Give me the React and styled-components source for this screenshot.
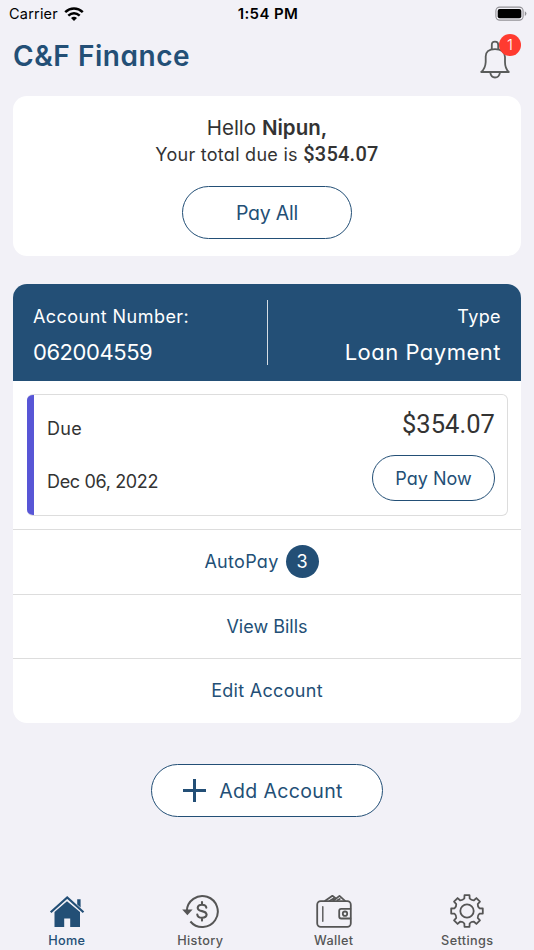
import React from "react";
import styled, { createGlobalStyle } from "styled-components";

const navy = "#234f76";
const grey = "#555555";

const GlobalStyle = createGlobalStyle`
  * {
    box-sizing: border-box;
  }
  body {
    margin: 0;
    background: #f2f1f7;
    font-family: Inter, "Open Sans", sans-serif;
    font-feature-settings: "cv11";
    color: #333333;
  }
  button {
    font-family: inherit;
    font-feature-settings: inherit;
    padding: 0;
    cursor: pointer;
  }
`;

const Screen = styled.div`
  display: flex;
  flex-direction: column;
  width: 534px;
  height: 950px;
  overflow: hidden;
`;

const StatusBar = styled.div`
  display: grid;
  grid-template-columns: 1fr auto 1fr;
  align-items: center;
  height: 28px;
  padding: 0 7px 0 9px;
  font-size: 14.5px;
  line-height: 28px;
  color: #000000;
  font-feature-settings: normal;
`;

const Carrier = styled.div`
  display: flex;
  align-items: center;
  gap: 6px;
  letter-spacing: 0.2px;
`;

const Clock = styled.div`
  font-size: 15px;
  font-weight: 600;
  letter-spacing: 0.4px;
`;

const Battery = styled.svg`
  justify-self: end;
`;

const Header = styled.header`
  display: flex;
  justify-content: space-between;
  align-items: flex-start;
  height: 68px;
  padding: 10px 24px 0 13px;
`;

const Title = styled.h1`
  margin: 0;
  font-size: 28px;
  font-weight: 600;
  line-height: 37px;
  letter-spacing: 0.55px;
  color: ${navy};
`;

const Bell = styled.div`
  position: relative;
  width: 30px;
  height: 40px;
  margin-top: 2px;

  svg {
    display: block;
  }
`;

const BellCount = styled.span`
  position: absolute;
  top: -6px;
  left: 19px;
  width: 22px;
  height: 22px;
  border-radius: 50%;
  background: #ff3b30;
  color: white;
  font-size: 15px;
  font-weight: 300;
  line-height: 22px;
  text-align: center;
`;

const Card = styled.section`
  margin: 0 13px;
  border-radius: 14px;
  background: white;
  overflow: hidden;
`;

const Greeting = styled(Card)`
  display: flex;
  flex-direction: column;
  align-items: center;
  flex: none;
  height: 160px;
  padding-top: 18px;
`;

const Hello = styled.div`
  font-size: 20.5px;
  line-height: 27px;

  b {
    font-weight: 600;
  }
`;

const TotalDue = styled.div`
  margin-bottom: 17px;
  font-size: 18px;
  line-height: 28px;
  letter-spacing: 0.27px;
`;

const Amount = styled.span`
  font-family: Roboto, sans-serif;
  font-size: ${p => p.$size}px;
  font-weight: ${p => p.$weight || 400};
  letter-spacing: ${p => p.$tracking || 0}px;
  line-height: ${p => p.$line || 20}px;
`;

const PillButton = styled.button`
  display: flex;
  align-items: center;
  justify-content: center;
  flex: none;
  width: ${p => p.$width}px;
  height: ${p => p.$height}px;
  border: 1.5px solid ${navy};
  border-radius: 27px;
  background: white;
  color: ${navy};
  font-size: ${p => p.$size}px;
  letter-spacing: ${p => p.$tracking}px;
`;

const Account = styled(Card)`
  flex: none;
  margin-top: 28px;
`;

const AccountHeader = styled.div`
  display: flex;
  height: 97px;
  padding: 16px 20px 0 20px;
  background: ${navy};
  color: white;
`;

const Divider = styled.div`
  width: 1px;
  height: 65px;
  background: #d5dde4;
`;

const Column = styled.div`
  flex: 1;
  text-align: ${p => p.$align || "left"};
`;

const Label = styled.div`
  font-size: 18px;
  line-height: 33px;
  letter-spacing: ${p => p.$tracking}px;
`;

const Value = styled.div`
  font-size: 22px;
  line-height: 38px;
  letter-spacing: ${p => p.$tracking}px;
`;

const Bill = styled.div`
  display: flex;
  justify-content: space-between;
  height: 122px;
  margin: 13px 13px 13px 14px;
  border: 1px solid #dddddd;
  border-left: 0;
  border-radius: 6px;
  overflow: hidden;
`;

const BillAccent = styled.div`
  width: 7px;
  background: #5856d6;
`;

const BillDates = styled.div`
  flex: 1;
  padding: 16px 0 0 13px;
  font-size: 18px;
  line-height: 35px;
`;

const BillText = styled.div`
  margin-bottom: 18px;
  letter-spacing: ${p => p.$tracking}px;
`;

const BillPay = styled.div`
  display: flex;
  flex-direction: column;
  align-items: flex-end;
  gap: 14px;
  padding: 12px 12px 0 0;
`;

const ActionRow = styled.div`
  display: flex;
  align-items: center;
  justify-content: center;
  gap: 7px;
  height: ${p => p.$height}px;
  padding: 0 ${p => p.$inset || 0}px 1px 0;
  border-top: 1px solid #dddddd;
  color: ${navy};
  font-size: 18px;
  letter-spacing: ${p => p.$tracking}px;
`;

const ActionCount = styled.span`
  width: 33px;
  height: 33px;
  border-radius: 50%;
  background: ${navy};
  color: white;
  line-height: 33px;
  text-align: center;
  letter-spacing: 0;
`;

const AddWrapper = styled.div`
  display: flex;
  justify-content: center;
  margin-top: 41px;

  button {
    padding-right: 8px;
  }
  svg {
    margin-right: 13px;
  }
`;

const TabBar = styled.nav`
  display: grid;
  grid-template-columns: repeat(4, 1fr);
  margin-top: auto;
`;

const Tab = styled.div`
  display: flex;
  flex-direction: column;
  align-items: center;
  color: ${p => (p.$active ? navy : grey)};
  font-size: 12.7px;
  font-weight: 500;
  font-feature-settings: normal;
  line-height: 19px;
  letter-spacing: 0.35px;
`;

const WifiIcon = () => (
  <svg width="20" height="14" viewBox="0 0 20 14" fill="none" stroke="#000">
    <path d="M1.2 5.2Q5.2 1.5 10 1.5T18.8 5.2" strokeWidth="2.5" />
    <path d="M4.3 8.6Q7 6.2 10 6.2T15.7 8.6" strokeWidth="2.5" />
    <path d="M7 11Q10 8.7 13 11L10 14Z" fill="#000" stroke="none" />
  </svg>
);

const BatteryIcon = () => (
  <Battery width="32" height="16" viewBox="0 0 32 16">
    <rect x="0.9" y="1.1" width="27.2" height="13" rx="3.8" fill="none" stroke="#929196" strokeWidth="1.1" />
    <rect x="2.7" y="2.9" width="23.6" height="9.4" rx="2" />
    <path d="M29.8 5.3Q31.4 6 31.4 7.6T29.8 9.9Z" fill="#929196" />
  </Battery>
);

const BellIcon = () => (
  <svg width="30" height="40" viewBox="0 0 30 40" fill="none" stroke="#5a5c5b" strokeWidth="1.8">
    <path d="M11.8 9.4V4.8Q11.8 1.6 15 1.6T18.2 4.8V9.4" />
    <path d="M1.2 32H28.8Q25 28.5 25 22V17Q24.6 9.2 15 9.2T5.7 17V22Q5.4 28.5 1.2 32Z" strokeLinejoin="round" />
    <path d="M10.3 32.6Q11 37.5 15 37.5T20 32.6" />
  </svg>
);

const PlusIcon = () => (
  <svg width="23" height="23" viewBox="0 0 23 23" stroke={navy} strokeWidth="3">
    <path d="M11.5 0V23M0 11.5H23" />
  </svg>
);

const TabIcon = ({ children }) => (
  <svg
    width="40"
    height="40"
    viewBox="0 0 40 40"
    fill="none"
    stroke="currentColor"
    strokeWidth="1.8"
    strokeLinecap="round"
    strokeLinejoin="round"
  >
    {children}
  </svg>
);

const HomeIcon = () => (
  <TabIcon>
    <g fill="currentColor" stroke="none">
      <path d="M20 10.2L33 21V36H23.2V27.5H17.2V36H7.5V21Z" />
      <path d="M30.2 8.2H33.6V16.5L30.2 13.4Z" />
    </g>
    <path d="M3.7 21.2L20.2 6.4L36.5 21.2" strokeWidth="2.2" strokeLinecap="butt" strokeLinejoin="miter" />
  </TabIcon>
);

const HistoryIcon = () => (
  <TabIcon>
    <path d="M6.8 20A15.5 15.5 0 1 1 10.4 30.5" strokeWidth="2" strokeLinecap="butt" />
    <path d="M2.2 18.6H12.6L7.4 24.2Z" fill="currentColor" stroke="none" />
    <path
      d="M26.3 16.6Q26 13.7 22 13.7T17.7 16.8Q17.7 19.3 22 20.1T26.6 23.7Q26.3 26.8 22 26.8T17.3 23.6M22 11V13.7M22 26.8V29.6"
      strokeWidth="2.1"
    />
  </TabIcon>
);

const WalletIcon = () => (
  <TabIcon>
    <rect x="3.2" y="10.2" width="33.6" height="25.6" rx="3.5" />
    <path d="M11.2 9.8L18.4 4.8L21.2 6.9M15.8 9.8L19.6 7.5M19.3 9.8L25.5 4.9L31 9.8M23.4 9.2L25.8 8" />
    <path d="M8.8 15.8V30.2" strokeWidth="1.4" />
    <path d="M36.4 17.8H27.2Q25.2 17.8 25.2 19.8V25.5Q25.2 27.5 27.2 27.5H36.4" />
    <circle cx="31" cy="22.7" r="2.2" />
  </TabIcon>
);

const gearPoint = (radius, degrees) => {
  const angle = (degrees * Math.PI) / 180;
  return `${20 + radius * Math.sin(angle)} ${20 - radius * Math.cos(angle)}`;
};

const gearOutline = [0, 45, 90, 135, 180, 225, 270, 315]
  .map(
    (a, i) =>
      `${i === 0 ? "M" : "L"}${gearPoint(12.8, a - 12)}L${gearPoint(16, a - 9)}` +
      `L${gearPoint(16, a + 9)}L${gearPoint(12.8, a + 12)}` +
      `Q${gearPoint(11.4, a + 22.5)} ${gearPoint(12.8, a + 33)}`
  )
  .join("");

const SettingsIcon = () => (
  <TabIcon>
    <path d={`${gearOutline}Z`} />
    <circle cx="20" cy="20" r="6.7" />
  </TabIcon>
);

const tabs = [
  { name: "Home", Icon: HomeIcon },
  { name: "History", Icon: HistoryIcon },
  { name: "Wallet", Icon: WalletIcon },
  { name: "Settings", Icon: SettingsIcon }
];

const App = () => (
  <>
    <GlobalStyle />
    <Screen>
      <StatusBar>
        <Carrier>
          Carrier
          <WifiIcon />
        </Carrier>
        <Clock>1:54 PM</Clock>
        <BatteryIcon />
      </StatusBar>

      <Header>
        <Title>C&amp;F Finance</Title>
        <Bell>
          <BellIcon />
          <BellCount>1</BellCount>
        </Bell>
      </Header>

      <Greeting>
        <Hello>
          Hello <b>Nipun,</b>
        </Hello>
        <TotalDue>
          Your total due is{" "}
          <Amount $size={20} $weight={500} $tracking={0.25}>
            $354.07
          </Amount>
        </TotalDue>
        <PillButton $width={170} $height={53} $size={19.5} $tracking={-0.2}>
          Pay All
        </PillButton>
      </Greeting>

      <Account>
        <AccountHeader>
          <Column>
            <Label $tracking={0.45}>Account Number:</Label>
            <Value $tracking={-0.45}>062004559</Value>
          </Column>
          <Divider />
          <Column $align="right">
            <Label $tracking={0.4}>Type</Label>
            <Value $tracking={0.5}>Loan Payment</Value>
          </Column>
        </AccountHeader>
        <Bill>
          <BillAccent />
          <BillDates>
            <BillText $tracking={0.3}>Due</BillText>
            <BillText $tracking={-0.35}>Dec 06, 2022</BillText>
          </BillDates>
          <BillPay>
            <Amount $size={25.5} $line={34} $tracking={0.05}>
              $354.07
            </Amount>
            <PillButton $width={123} $height={46} $size={18} $tracking={0}>
              Pay Now
            </PillButton>
          </BillPay>
        </Bill>
        <ActionRow $height={65} $tracking={0.3} $inset={11}>
          AutoPay
          <ActionCount>3</ActionCount>
        </ActionRow>
        <ActionRow $height={64} $tracking={0}>
          View Bills
        </ActionRow>
        <ActionRow $height={65} $tracking={0.3}>
          Edit Account
        </ActionRow>
      </Account>

      <AddWrapper>
        <PillButton $width={232} $height={53} $size={19.5} $tracking={0.35}>
          <PlusIcon />
          Add Account
        </PillButton>
      </AddWrapper>

      <TabBar>
        {tabs.map(({ name, Icon }) => (
          <Tab key={name} $active={name === "Home"}>
            <Icon />
            {name}
          </Tab>
        ))}
      </TabBar>
    </Screen>
  </>
);

export default App;
